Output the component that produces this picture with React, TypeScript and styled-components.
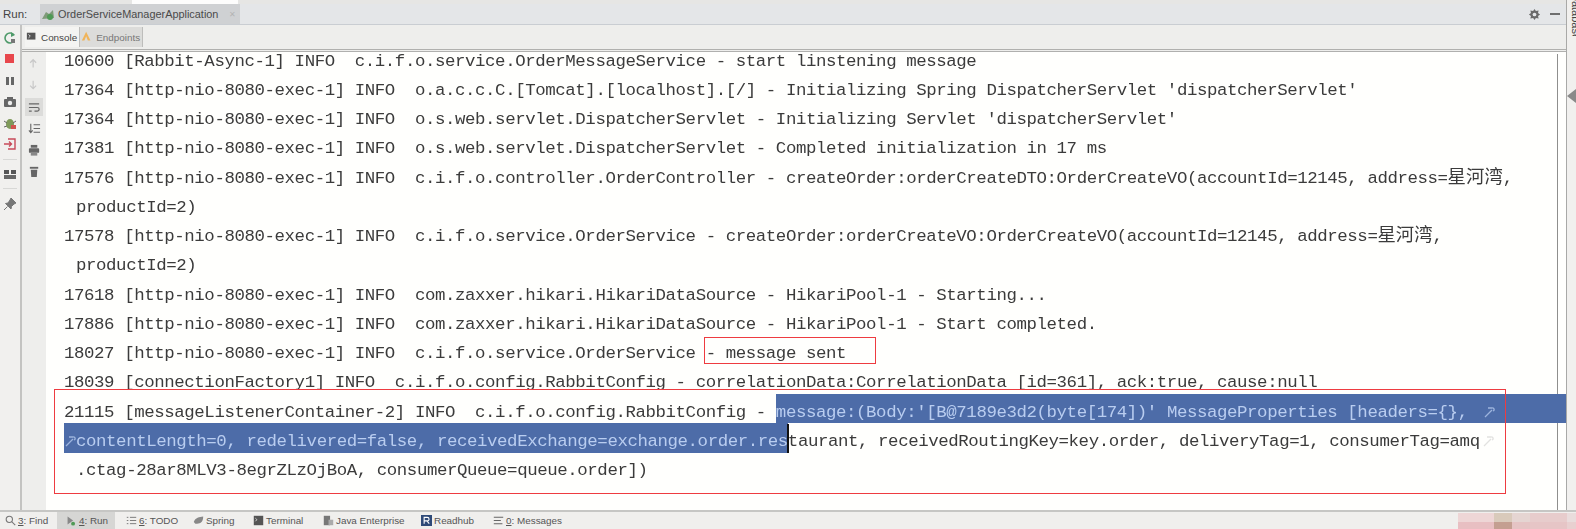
import React from "react";
import styled, { createGlobalStyle } from "styled-components";

const GlobalStyle = createGlobalStyle`
  html, body { margin: 0; padding: 0; background: #fff; overflow: hidden; }
  * { box-sizing: border-box; }
`;

const Page = styled.div`
  position: relative;
  width: 1576px;
  height: 529px;
  display: flex;
  flex-direction: column;
  overflow: hidden;
  font-family: "Liberation Sans", "Noto Sans", sans-serif;
  color: #3a3a3a;
  background: #f1f0ee;
`;

const Main = styled.div`
  flex: 1;
  min-height: 0;
  display: flex;
`;

const RunPanel = styled.div`
  flex: 1;
  min-width: 0;
  display: flex;
  flex-direction: column;
  border-right: 1px solid #a9a9a7;
`;

const TopSliver = styled.div`
  height: 4px;
  padding-left: 132px;
  background: #e6e6e4;
`;

const SliverTab = styled.div`
  width: 106px;
  height: 100%;
  background: #fdfdfc;
`;

const RunBar = styled.div`
  height: 21px;
  display: flex;
  align-items: center;
  background: #e4e6e8;
  border-bottom: 1px solid #c9cdd2;
  padding-right: 6px;
`;

const RunLabel = styled.span`
  width: 40px;
  padding-left: 3px;
  font-size: 11.5px;
  color: #444;
`;

const RunTab = styled.div`
  width: 200px;
  height: 20px;
  display: flex;
  align-items: center;
  gap: 3px;
  padding-left: 1px;
  background: #cfd1d3;
  font-size: 10.9px;
  color: #4a4a4a;
  white-space: nowrap;
`;

const TabClose = styled.span`
  margin-left: 8px;
  font-size: 8px;
  color: #b4b4b4;
`;

const RunBarTools = styled.div`
  margin-left: auto;
  display: flex;
  align-items: center;
  gap: 9px;
`;

const Dash = styled.span`
  width: 10px;
  height: 2px;
  background: #6e6e6e;
`;

const TabRow = styled.div`
  height: 27px;
  display: flex;
  align-items: flex-start;
  padding: 2px 0 0 25px;
  background: #eeeeec;
  border-bottom: 3px double #b0b0ae;
`;

const SubTab = styled.div<{ $active?: boolean }>`
  height: 20px;
  display: flex;
  align-items: center;
  gap: 3px;
  padding: 0 2px 0 1px;
  font-size: 9.9px;
  color: ${(p) => (p.$active ? "#444" : "#777")};
  background: ${(p) => (p.$active ? "#f4f4f2" : "#dcdcda")};
  border-right: 1px solid #bdbdbb;
`;

const ContentRow = styled.div`
  flex: 1;
  min-height: 0;
  display: flex;
`;

const LeftTools = styled.div`
  width: 22px;
  margin-top: -27px;
  padding-top: 6px;
  display: flex;
  flex-direction: column;
  align-items: center;
  gap: 7.3px;
  background: #f1f0ee;
  border-right: 2px solid #c3c3c1;
  z-index: 1;
`;

const ToolRule = styled.span`
  width: 14px;
  height: 1px;
  background: #d8d8d6;
`;

const ConsoleTools = styled.div`
  width: 24px;
  padding-top: 3px;
  display: flex;
  flex-direction: column;
  align-items: center;
  gap: 3.5px;
  background: #eeeeec;
`;

const ToolSlot = styled.div<{ $on?: boolean }>`
  width: 18px;
  height: 18px;
  display: flex;
  align-items: center;
  justify-content: center;
  background: ${(p) => (p.$on ? "#dcdcda" : "transparent")};
`;

const Console = styled.div`
  position: relative;
  flex: 1;
  min-width: 0;
  overflow: hidden;
  background: #fffffd;
  font-family: "Liberation Mono", "Noto Sans CJK SC", monospace;
  font-size: 17.4px;
  letter-spacing: -0.41px;
  line-height: 29.25px;
  color: #3b3b3b;
  white-space: pre;
  filter: blur(0.35px);
`;

const ScrollTrack = styled.div`
  position: absolute;
  top: 2px;
  right: 0;
  bottom: 0;
  width: 9px;
  border-left: 1px solid #8f8f8d;
`;

const Log = styled.div`
  position: relative;
  margin-top: -5.4px;
`;

const Line = styled.div<{ $wrapped?: boolean }>`
  height: 29.25px;
  padding-left: ${(p) => (p.$wrapped ? "30px" : "18px")};
`;

const Cjk = styled.span`
  font-family: "Noto Sans CJK SC", sans-serif;
  font-size: 18.4px;
  letter-spacing: 0;
  line-height: 0;
`;

const SelLine = styled.div`
  height: 29.25px;
  display: flex;
  align-items: flex-start;
  padding-left: 18px;
`;

/* the band sits a little above the text in the capture */
const Sel = styled.span<{ $fill?: boolean }>`
  display: flex;
  align-items: center;
  height: 29.25px;
  margin-top: -3.5px;
  padding-top: 7px;
  flex: ${(p) => (p.$fill ? "1" : "none")};
  background: #4d6ca8;
  color: #b9cdf0;
`;

const Caret = styled.span`
  width: 2px;
  height: 29px;
  margin: -3px -1px 0;
  background: #111;
  z-index: 1;
`;

const WrapMark = styled.svg<{ $gap?: number }>`
  flex: none;
  align-self: center;
  margin-left: ${(p) => p.$gap ?? 0}px;
`;

const RightStrip = styled.div`
  width: 9px;
  padding-left: 3px;
  background: #f1f0ee;
  overflow: visible;
`;

const DatabaseBox = styled.div`
  height: 36px;
  overflow: hidden;
`;

const DatabaseLabel = styled.div`
  writing-mode: vertical-rl;
  font-size: 11px;
  line-height: 11px;
  margin-top: -7px;
  color: #444;
`;

const ScrollTriangle = styled.div`
  width: 0;
  margin: 53px 0 0 -3px;
  border-style: solid;
  border-width: 7px 9px 7px 0;
  border-color: transparent #8a8a8a transparent transparent;
`;

const BottomBar = styled.div`
  height: 19px;
  display: flex;
  align-items: center;
  background: #f0efed;
  border-top: 2px solid #c6c6c4;
  padding-left: 5px;
  font-size: 9.9px;
  color: #555;
  white-space: nowrap;
`;

const BottomItem = styled.div<{ $active?: boolean; $w: number }>`
  flex: none;
  width: ${(p) => p.$w}px;
  height: 100%;
  display: flex;
  align-items: center;
  gap: 2px;
  padding-left: ${(p) => (p.$active ? "9px" : "0")};
  margin-right: ${(p) => (p.$active ? "11px" : "0")};
  background: ${(p) => (p.$active ? "#d6d6d4" : "transparent")};

  u {
    text-underline-offset: 1px;
  }
`;

const Marker = styled.div<{ $x: number; $y: number; $w: number; $h: number }>`
  position: absolute;
  left: ${(p) => p.$x}px;
  top: ${(p) => p.$y}px;
  width: ${(p) => p.$w}px;
  height: ${(p) => p.$h}px;
  border: 1.5px solid #ee3b40;
  pointer-events: none;
  z-index: 3;
`;

const Mosaic = styled.div`
  position: absolute;
  right: 0;
  bottom: 0;
  width: 118px;
  height: 16px;
  display: grid;
  grid-template-columns: 36px 18px 18px 37px 9px;
  grid-template-rows: 9px 7px;
  z-index: 3;
`;

const MosaicCell = styled.span<{ $c: string }>`
  background: ${(p) => p.$c};
`;

const Ico = ({ children, s = 14 }: { children: React.ReactNode; s?: number }) => (
  <svg width={s} height={s} viewBox="0 0 14 14" fill="none" style={{ flex: "none" }}>
    {children}
  </svg>
);

const SoftWrap = ({ color, gap }: { color: string; gap?: number }) => (
  <WrapMark $gap={gap} width="12" height="14" viewBox="0 0 12 14" fill="none">
    <path d="M2 12 L9 5 M5 3 H9 A1.5 1.5 0 0 1 10 6" stroke={color} strokeWidth="1.3" />
  </WrapMark>
);

const mosaicColors = [
  "#eed6d6", "#d9cabb", "#e5d5d2", "#e7cccc", "#e9dcdc",
  "#e8bfc2", "#c49f91", "#e5c4c4", "#e6c5c6", "#e8d0d0",
];

export default function App() {
  return (
    <Page>
      <GlobalStyle />
      <Main>
        <RunPanel>
          <TopSliver>
            <SliverTab />
          </TopSliver>
          <RunBar>
            <RunLabel>Run:</RunLabel>
            <RunTab>
              <Ico>
                <path d="M1 12 L5 5 L8 7 L12 3 L13 11 Z" fill="#7f9a78" />
                <circle cx="9" cy="10" r="3" fill="#4f9a55" />
              </Ico>
              OrderServiceManagerApplication
              <TabClose>✕</TabClose>
            </RunTab>
            <RunBarTools>
              <Ico s={13}>
                <path d="M7 1 L8.5 3.2 L11.4 2.6 L10.8 5.5 L13 7 L10.8 8.5 L11.4 11.4 L8.5 10.8 L7 13 L5.5 10.8 L2.6 11.4 L3.2 8.5 L1 7 L3.2 5.5 L2.6 2.6 L5.5 3.2 Z" fill="#6a6a6a" />
                <circle cx="7" cy="7" r="2" fill="#e4e6e8" />
              </Ico>
              <Dash />
            </RunBarTools>
          </RunBar>
          <TabRow>
            <SubTab $active>
              <Ico s={12}>
                <rect x="1" y="2" width="10" height="8" fill="#555" />
                <path d="M3 4 L5 6 L3 8" stroke="#eee" />
              </Ico>
              Console
            </SubTab>
            <SubTab>
              <Ico s={12}>
                <path d="M1 11 L6 1 L11 11 L8 11 L6 6 L4 11 Z" fill="#f0b45a" />
              </Ico>
              Endpoints
            </SubTab>
          </TabRow>
          <ContentRow>
            <LeftTools>
              <Ico>
                <path d="M11 4 A5 5 0 1 0 11 10" stroke="#4f9a6a" strokeWidth="1.6" />
                <path d="M8 1 L12 4 L8 6 Z" fill="#4f9a6a" />
                <rect x="8" y="8" width="4" height="4" fill="#777" />
              </Ico>
              <Ico>
                <rect x="2" y="2" width="9" height="9" fill="#e8474c" />
              </Ico>
              <Ico>
                <rect x="3" y="3" width="3" height="8" fill="#666" />
                <rect x="8" y="3" width="3" height="8" fill="#666" />
              </Ico>
              <Ico>
                <rect x="1" y="4" width="12" height="8" rx="1" fill="#666" />
                <rect x="4" y="2" width="6" height="3" fill="#666" />
                <circle cx="7" cy="8" r="2.2" fill="#eee" />
              </Ico>
              <Ico>
                <ellipse cx="7" cy="8" rx="4" ry="5" fill="#7f9a5a" />
                <path d="M1 5 L4 7 M13 5 L10 7 M1 11 L4 10 M13 11 L10 10" stroke="#666" />
                <rect x="8" y="9" width="5" height="4" fill="#d2534f" />
              </Ico>
              <Ico>
                <path d="M5 2 H12 V12 H5" stroke="#c84a5a" strokeWidth="1.4" />
                <path d="M1 7 H8 M6 4.5 L8.5 7 L6 9.5" stroke="#c84a5a" strokeWidth="1.4" />
              </Ico>
              <ToolRule />
              <Ico>
                <rect x="1" y="3" width="5" height="4" fill="#555" />
                <rect x="8" y="3" width="5" height="4" fill="#555" />
                <rect x="1" y="8" width="12" height="4" fill="#666" />
              </Ico>
              <ToolRule />
              <Ico>
                <path d="M8 1 L13 6 L11 7 L8.5 9.5 L8 12 L2.5 6.5 L5 6 L7 3 Z M4.5 9.5 L1 13" fill="#777" stroke="#777" />
              </Ico>
            </LeftTools>
            <ConsoleTools>
              <ToolSlot>
                <Ico s={12}>
                  <path d="M6 11 V2 M2.5 5.5 L6 2 L9.5 5.5" stroke="#c8c8c8" strokeWidth="1.4" />
                </Ico>
              </ToolSlot>
              <ToolSlot>
                <Ico s={12}>
                  <path d="M6 1 V10 M2.5 6.5 L6 10 L9.5 6.5" stroke="#c8c8c8" strokeWidth="1.4" />
                </Ico>
              </ToolSlot>
              <ToolSlot $on>
                <Ico s={13}>
                  <path d="M1 3 H12 M1 7 H10 A2 2 0 0 1 10 11 H7 M1 11 H4" stroke="#666" strokeWidth="1.3" />
                </Ico>
              </ToolSlot>
              <ToolSlot>
                <Ico s={13}>
                  <path d="M6 3 H13 M6 7 H13 M6 11 H13 M3 2 V11 M1 9 L3 11.5 L5 9" stroke="#666" strokeWidth="1.2" />
                </Ico>
              </ToolSlot>
              <ToolSlot>
                <Ico s={13}>
                  <rect x="3" y="1" width="7" height="3" fill="#666" />
                  <rect x="1" y="4.5" width="11" height="5" rx="1" fill="#666" />
                  <rect x="3" y="8.5" width="7" height="4" fill="#888" />
                </Ico>
              </ToolSlot>
              <ToolSlot>
                <Ico s={13}>
                  <rect x="2" y="2" width="9" height="2" fill="#666" />
                  <path d="M3 5 H10 L9.5 13 H3.5 Z" fill="#666" />
                </Ico>
              </ToolSlot>
            </ConsoleTools>
            <Console>
              <ScrollTrack />
              <Log>
                <Line>{"10600 [Rabbit-Async-1] INFO  c.i.f.o.service.OrderMessageService - start linstening message"}</Line>
                <Line>{"17364 [http-nio-8080-exec-1] INFO  o.a.c.c.C.[Tomcat].[localhost].[/] - Initializing Spring DispatcherServlet 'dispatcherServlet'"}</Line>
                <Line>{"17364 [http-nio-8080-exec-1] INFO  o.s.web.servlet.DispatcherServlet - Initializing Servlet 'dispatcherServlet'"}</Line>
                <Line>{"17381 [http-nio-8080-exec-1] INFO  o.s.web.servlet.DispatcherServlet - Completed initialization in 17 ms"}</Line>
                <Line>
                  {"17576 [http-nio-8080-exec-1] INFO  c.i.f.o.controller.OrderController - createOrder:orderCreateDTO:OrderCreateVO(accountId=12145, address="}
                  <Cjk>星河湾</Cjk>,
                </Line>
                <Line $wrapped>{"productId=2)"}</Line>
                <Line>
                  {"17578 [http-nio-8080-exec-1] INFO  c.i.f.o.service.OrderService - createOrder:orderCreateVO:OrderCreateVO(accountId=12145, address="}
                  <Cjk>星河湾</Cjk>,
                </Line>
                <Line $wrapped>{"productId=2)"}</Line>
                <Line>{"17618 [http-nio-8080-exec-1] INFO  com.zaxxer.hikari.HikariDataSource - HikariPool-1 - Starting..."}</Line>
                <Line>{"17886 [http-nio-8080-exec-1] INFO  com.zaxxer.hikari.HikariDataSource - HikariPool-1 - Start completed."}</Line>
                <Line>{"18027 [http-nio-8080-exec-1] INFO  c.i.f.o.service.OrderService - message sent"}</Line>
                <Line>{"18039 [connectionFactory1] INFO  c.i.f.o.config.RabbitConfig - correlationData:CorrelationData [id=361], ack:true, cause:null"}</Line>
                <SelLine>
                  {"21115 [messageListenerContainer-2] INFO  c.i.f.o.config.RabbitConfig - "}
                  <Sel $fill>
                    {"message:(Body:'[B@7189e3d2(byte[174])' MessageProperties [headers={},"}
                    <SoftWrap color="#9db4dd" gap={15} />
                  </Sel>
                </SelLine>
                <SelLine>
                  <Sel>
                    <SoftWrap color="#9db4dd" />
                    {"contentLength=0, redelivered=false, receivedExchange=exchange.order.res"}
                  </Sel>
                  <Caret />
                  {"taurant, receivedRoutingKey=key.order, deliveryTag=1, consumerTag=amq"}
                  <SoftWrap color="#e2e2e0" gap={2} />
                </SelLine>
                <Line $wrapped>{".ctag-28ar8MLV3-8egrZLzOjBoA, consumerQueue=queue.order])"}</Line>
              </Log>
            </Console>
          </ContentRow>
        </RunPanel>
        <RightStrip>
          <DatabaseBox>
            <DatabaseLabel>Database</DatabaseLabel>
          </DatabaseBox>
          <ScrollTriangle />
        </RightStrip>
      </Main>
      <BottomBar>
        <BottomItem $w={52}>
          <Ico s={11}>
            <circle cx="5.5" cy="5.5" r="4" stroke="#777" strokeWidth="1.4" />
            <path d="M8.5 8.5 L13 13" stroke="#777" strokeWidth="1.4" />
          </Ico>
          <span>
            <u>3</u>: Find
          </span>
        </BottomItem>
        <BottomItem $active $w={58}>
          <Ico s={11}>
            <path d="M2 2 L9 7 L2 12 Z" fill="#888" />
            <circle cx="9" cy="11" r="2.5" fill="#4f9a55" />
          </Ico>
          <span>
            <u>4</u>: Run
          </span>
        </BottomItem>
        <BottomItem $w={67}>
          <Ico s={11}>
            <path d="M1 3 H3 M5 3 H13 M1 7 H3 M5 7 H13 M1 11 H3 M5 11 H13" stroke="#777" strokeWidth="1.2" />
          </Ico>
          <span>
            <u>6</u>: TODO
          </span>
        </BottomItem>
        <BottomItem $w={60}>
          <Ico s={11}>
            <path d="M1 9 C3 3 8 3 13 2 C13 9 9 12 3 11 Z" fill="#888" />
          </Ico>
          Spring
        </BottomItem>
        <BottomItem $w={70}>
          <Ico s={11}>
            <rect x="1" y="1" width="12" height="12" fill="#555" />
            <path d="M3 4 L5 6 L3 8" stroke="#eee" />
          </Ico>
          Terminal
        </BottomItem>
        <BottomItem $w={98}>
          <Ico s={11}>
            <rect x="1" y="1" width="8" height="12" fill="#777" />
            <rect x="7" y="6" width="6" height="7" fill="#aaa" />
          </Ico>
          Java Enterprise
        </BottomItem>
        <BottomItem $w={72}>
          <Ico s={11}>
            <rect x="0" y="0" width="14" height="14" fill="#2f4a78" />
            <path d="M4 11 V3 H8 A2.2 2.2 0 0 1 8 7.5 H4 M7.5 7.5 L10.5 11" stroke="#fff" strokeWidth="1.4" />
          </Ico>
          Readhub
        </BottomItem>
        <BottomItem $w={80}>
          <Ico s={11}>
            <path d="M1 3 H13 M1 7 H10 M1 11 H12" stroke="#666" strokeWidth="1.3" />
          </Ico>
          <span>
            <u>0</u>: Messages
          </span>
        </BottomItem>
      </BottomBar>
      <Marker $x={704} $y={337} $w={172} $h={27} />
      <Marker $x={54} $y={389} $w={1452} $h={105} />
      <Mosaic>
        {mosaicColors.map((c, i) => (
          <MosaicCell key={i} $c={c} />
        ))}
      </Mosaic>
    </Page>
  );
}
